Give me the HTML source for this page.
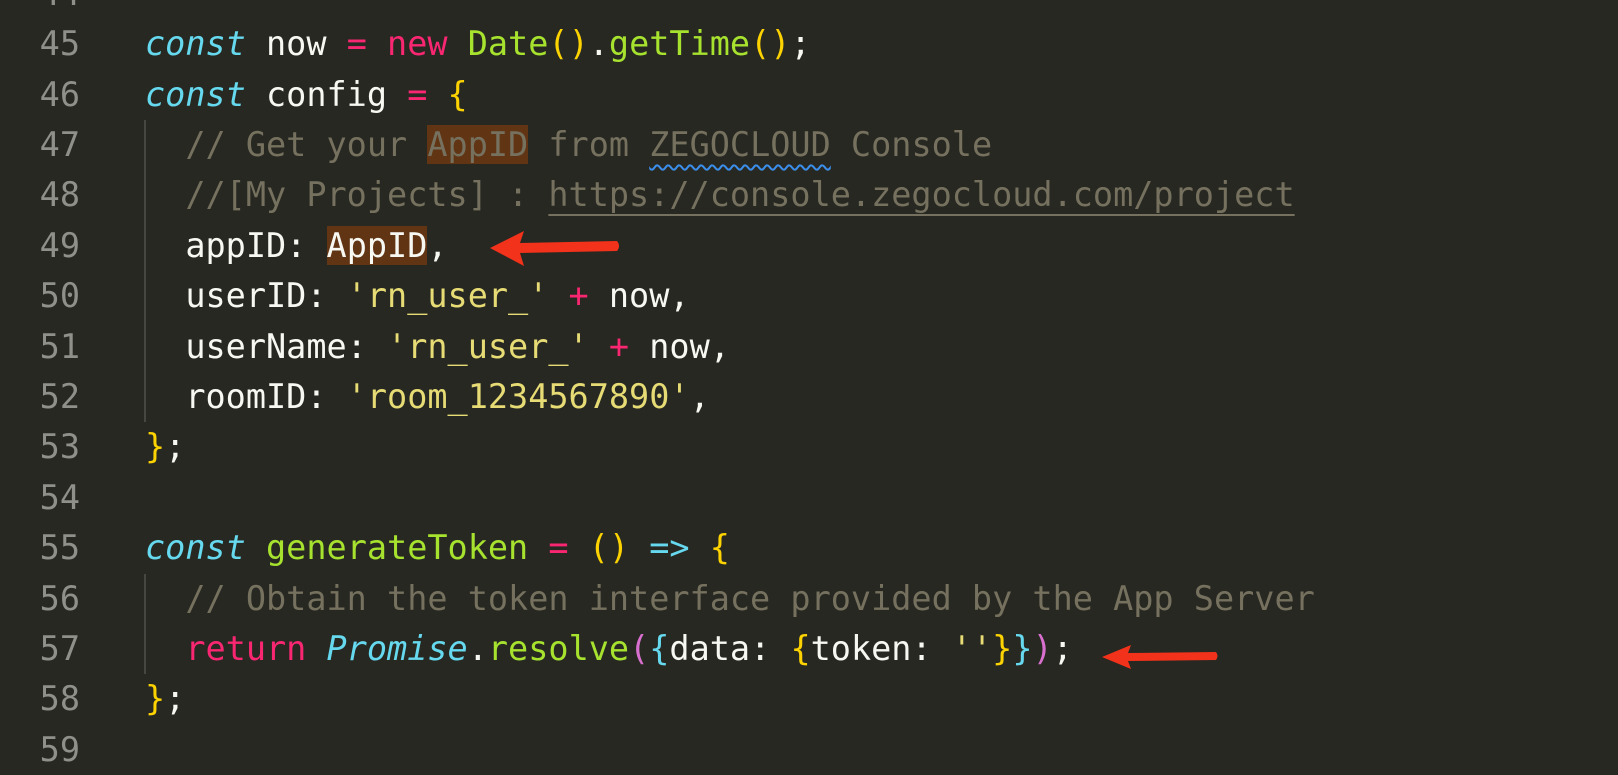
<!DOCTYPE html>
<html><head><meta charset="utf-8"><style>
html,body{margin:0;padding:0;background:#272822;width:1618px;height:772px;overflow:hidden}
.c{position:absolute;left:0;top:0;font-family:"DejaVu Sans Mono","Liberation Mono",monospace;font-size:33.5px;}
.l{position:absolute;left:0;height:50.4px;line-height:50.4px;white-space:pre;color:#f8f8f2}
.n{position:absolute;left:0;width:80px;text-align:right;color:#8f908a}
.t{position:absolute;left:145px}
.k{color:#66d9ef;font-style:italic}.p{color:#f92672}.g{color:#a6e22e}.y{color:#e6db74}
.b{color:#fcd200}.cm{color:#75715e}.cb{color:#66d9ef}.pk{color:#d970d0}
.hl{background:#613413}
.u{text-decoration:underline;text-decoration-color:#75715e;text-underline-offset:8px;text-decoration-thickness:2px}
.sq{text-decoration:underline wavy #3b8eea;text-underline-offset:8px;text-decoration-thickness:2px}
.guide{position:absolute;width:2px;background:#464741}
</style></head><body>
<div class="c">
<div class="l" style="top:-31.2px"><span class="n">44</span></div>
<div class="l" style="top:19.2px"><span class="n">45</span><span class="t"><span class="k">const</span> now <span class="p">=</span> <span class="p">new</span> <span class="g">Date</span><span class="b">()</span>.<span class="g">getTime</span><span class="b">()</span>;</span></div>
<div class="l" style="top:69.6px"><span class="n">46</span><span class="t"><span class="k">const</span> config <span class="p">=</span> <span class="b">{</span></span></div>
<div class="l" style="top:120px"><span class="n">47</span><span class="t cm">  // Get your <span class="hl">AppID</span> from <span class="sq">ZEGOCLOUD</span> Console</span></div>
<div class="l" style="top:170.4px"><span class="n">48</span><span class="t cm">  //[My Projects] : <span class="u">https://console.zegocloud.com/project</span></span></div>
<div class="l" style="top:220.8px"><span class="n">49</span><span class="t">  appID: <span class="hl">AppID</span>,</span></div>
<div class="l" style="top:271.2px"><span class="n">50</span><span class="t">  userID: <span class="y">'rn_user_'</span> <span class="p">+</span> now,</span></div>
<div class="l" style="top:321.6px"><span class="n">51</span><span class="t">  userName: <span class="y">'rn_user_'</span> <span class="p">+</span> now,</span></div>
<div class="l" style="top:372px"><span class="n">52</span><span class="t">  roomID: <span class="y">'room_1234567890'</span>,</span></div>
<div class="l" style="top:422.4px"><span class="n">53</span><span class="t"><span class="b">}</span>;</span></div>
<div class="l" style="top:472.8px"><span class="n">54</span></div>
<div class="l" style="top:523.2px"><span class="n">55</span><span class="t"><span class="k">const</span> <span class="g">generateToken</span> <span class="p">=</span> <span class="b">()</span> <span class="cb">=&gt;</span> <span class="b">{</span></span></div>
<div class="l" style="top:573.6px"><span class="n">56</span><span class="t cm">  // Obtain the token interface provided by the App Server</span></div>
<div class="l" style="top:624px"><span class="n">57</span><span class="t">  <span class="p">return</span> <span class="k">Promise</span>.<span class="g">resolve</span><span class="pk">(</span><span class="cb">{</span>data: <span class="b">{</span>token: <span class="y">''</span><span class="b">}</span><span class="cb">}</span><span class="pk">)</span>;</span></div>
<div class="l" style="top:674.4px"><span class="n">58</span><span class="t"><span class="b">}</span>;</span></div>
<div class="l" style="top:724.8px"><span class="n">59</span></div>
</div>
<div class="guide" style="left:144px;top:120px;height:302px"></div>
<div class="guide" style="left:144px;top:574px;height:100px"></div>
<svg width="1618" height="772" style="position:absolute;left:0;top:0">
<path d="M490 248 L524 231 L520 243 L617 241 Q621 246 617 251 L520 253 L524 266 Z" fill="#f2321a"/>
<path d="M1102 657 L1131 645 L1128 653 L1216 652 Q1219 656 1216 660 L1128 661 L1131 669 Z" fill="#f2321a"/>
</svg>
</body></html>
